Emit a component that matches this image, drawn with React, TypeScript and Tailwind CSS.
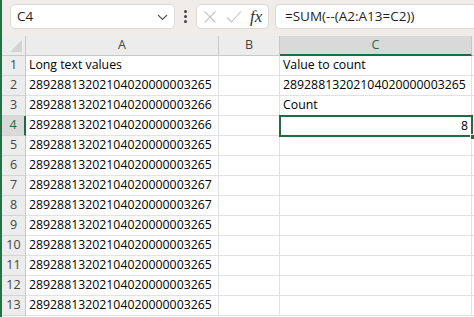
import {ReactNode} from 'react'

const LONG_A = [
  'Long text values',
  '28928813202104020000003265',
  '28928813202104020000003266',
  '28928813202104020000003266',
  '28928813202104020000003265',
  '28928813202104020000003265',
  '28928813202104020000003267',
  '28928813202104020000003267',
  '28928813202104020000003265',
  '28928813202104020000003265',
  '28928813202104020000003265',
  '28928813202104020000003265',
  '28928813202104020000003265'
]

const COL_C: Record<number, string> = {
  1: 'Value to count',
  2: '28928813202104020000003265',
  3: 'Count'
}

const FONT = {fontFamily: '"Open Sans", "Liberation Sans", sans-serif'}

const Toolbar = () => (
  <div className="flex items-center h-[36px] bg-[#f0ece9] pl-[8px] pb-[3px]">
    <div className="flex items-center justify-between w-[165px] h-[25px] bg-white rounded-[5px] border border-[#dcd8d5] pl-[6px] pr-[6px]">
      <span className="text-[13.5px] text-[#1f1f1f]">C4</span>
      <svg width="11" height="7" viewBox="0 0 11 7" className="mt-[2px]">
        <path d="M1 1 L5.5 5.5 L10 1" fill="none" stroke="#555" strokeWidth="1.1" />
      </svg>
    </div>
    <div className="flex flex-col gap-[2px] mx-[9px]">
      <span className="w-[3px] h-[3px] bg-[#444] rounded-full" />
      <span className="w-[3px] h-[3px] bg-[#444] rounded-full" />
      <span className="w-[3px] h-[3px] bg-[#444] rounded-full" />
    </div>
    <div className="flex items-center w-[73px] h-[25px] bg-white rounded-[5px] border border-[#dcd8d5] pl-[6px]">
      <svg width="14" height="14" viewBox="0 0 14 14">
        <path d="M1.5 1.5 L12.5 12.5 M12.5 1.5 L1.5 12.5" stroke="#c4c4c4" strokeWidth="1.1" />
      </svg>
      <svg width="16" height="14" viewBox="0 0 16 14" className="ml-[9px]">
        <path d="M1 7.5 L5.5 12 L15 1.5" fill="none" stroke="#c4c4c4" strokeWidth="1.1" />
      </svg>
      <span
        className="ml-[8px] text-[17px] italic text-[#333] leading-none"
        style={{fontFamily: '"Liberation Serif", serif'}}
      >
        fx
      </span>
    </div>
    <div className="flex items-center flex-1 h-[25px] bg-white rounded-l-[5px] border border-r-0 border-[#dcd8d5] ml-[6px] pl-[9px]">
      <span className="text-[13.5px] text-[#1f1f1f]">=SUM(--(A2:A13=C2))</span>
    </div>
  </div>
)

const Cell = ({w, children, right}: {w: string; children?: ReactNode; right?: boolean}) => (
  <div
    className={`${w} h-[20px] shrink-0 border-r border-b border-[#e1e1e1] flex items-end pb-[1px] px-[3px] text-[12.3px] text-black whitespace-nowrap overflow-hidden ${right ? 'justify-end' : ''}`}
  >
    {children}
  </div>
)

const App = () => {
  return (
    <div className="flex w-[474px] h-[317px] overflow-hidden bg-white" style={FONT}>
      <div className="w-[2px] h-full bg-[#217346] shrink-0" />
      <div className="flex flex-col flex-1">
        <Toolbar />
        {/* column headers */}
        <div className="flex h-[20px] bg-[#ececec]">
          <div className="w-[24px] shrink-0 border-r border-b border-[#c8c8c8] relative">
            <svg width="12" height="12" viewBox="0 0 12 12" className="absolute right-[3px] bottom-[3px]">
              <path d="M12 0 L12 12 L0 12 Z" fill="#d4d4d4" />
            </svg>
          </div>
          <div className="w-[193px] shrink-0 border-r border-b border-[#c8c8c8] flex items-center justify-center text-[12.5px] text-[#444]">
            A
          </div>
          <div className="w-[61px] shrink-0 border-r border-b border-[#c8c8c8] flex items-center justify-center text-[12.5px] text-[#444]">
            B
          </div>
          <div className="w-[192px] shrink-0 bg-[#d9d9d9] border-r border-[#c8c8c8] border-b-2 border-b-[#1e6c41] flex items-center justify-center text-[12.5px] text-[#1e6c41]">
            C
          </div>
          <div className="flex-1 border-b border-[#c8c8c8]" />
        </div>
        {LONG_A.map((a: string, i: number): ReactNode => {
          const row = i + 1
          const selected = row === 4
          return (
            <div key={row} className="flex h-[20px]">
              <div
                className={`w-[24px] shrink-0 border-b border-[#d4d4d4] flex items-center justify-center text-[12.5px] ${
                  selected
                    ? 'bg-[#d9d9d9] text-[#1e6c41] border-r-2 border-r-[#1e6c41]'
                    : 'bg-[#ececec] text-[#444] border-r border-r-[#c8c8c8]'
                }`}
              >
                {row}
              </div>
              <Cell w="w-[193px]">{a}</Cell>
              <Cell w="w-[61px]" />
              {selected ? (
                <div className="w-[192px] h-[20px] shrink-0 relative flex items-end justify-end pb-[1px] pr-[4px] text-[12.3px]">
                  8
                  <div className="absolute left-[-1px] top-[-1px] right-[-1px] bottom-[-1px] border-2 border-[#1e6c41]" />
                  <div className="absolute right-[-4px] bottom-[-4px] w-[6px] h-[6px] bg-[#1e6c41] border border-white" />
                </div>
              ) : (
                <Cell w="w-[192px]">{COL_C[row]}</Cell>
              )}
              <div className="flex-1 border-b border-[#e1e1e1]" />
            </div>
          )
        })}
      </div>
    </div>
  )
}

export default App
